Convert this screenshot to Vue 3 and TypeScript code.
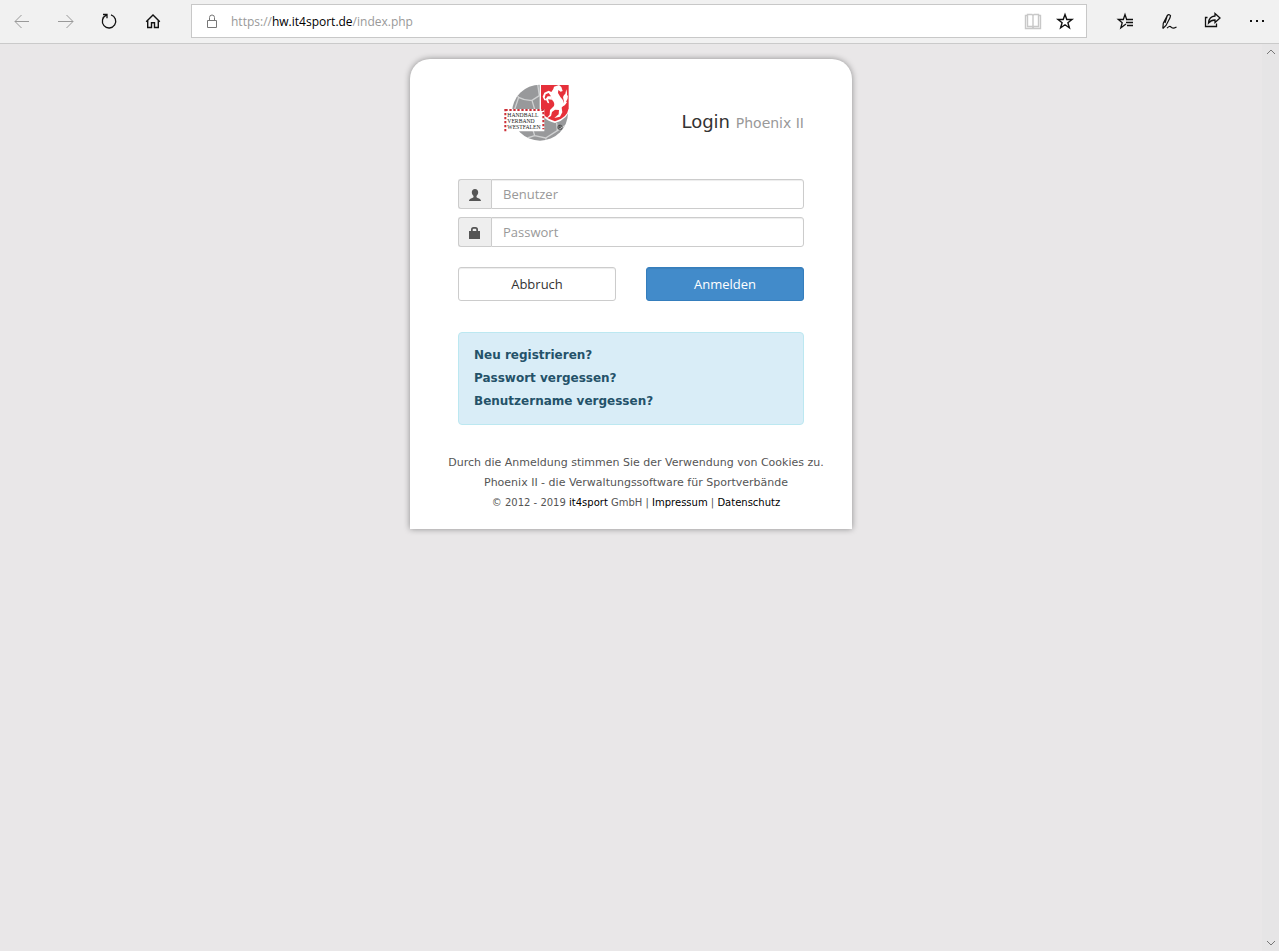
<script setup lang="ts">
import { ref } from 'vue'

const user = ref('')
const password = ref('')

const helpLinks: string[] = ['Neu registrieren?', 'Passwort vergessen?', 'Benutzername vergessen?']

function reset(): void {
  user.value = ''
  password.value = ''
}
</script>

<template>
  <div class="browser">
    <header class="toolbar">
      <nav class="tools" aria-label="Navigation">
        <button class="tool muted" type="button" aria-label="Zurück">
          <svg width="20" height="20" viewBox="0 0 20 20"><path d="M3 10.5H17M9.500 4L3 10.500L9.500 17" /></svg>
        </button>
        <button class="tool muted" type="button" aria-label="Vorwärts">
          <svg width="20" height="20" viewBox="0 0 20 20"><path d="M2 10.5H17M10.500 4L17 10.500L10.500 17" /></svg>
        </button>
        <button class="tool" type="button" aria-label="Aktualisieren">
          <svg width="20" height="20" viewBox="1 0 20 20">
            <path stroke-width="1.3" d="M12 3.900A6.700 6.700 0 1 1 7.300 4.200M4 3.500H8V7.300" />
          </svg>
        </button>
        <button class="tool" type="button" aria-label="Startseite">
          <svg width="20" height="20" viewBox="1 0 20 20">
            <path stroke-width="1.4" d="M3.200 10.800L10 4L16.800 10.800M4.700 9.500V16.500H8.500V11.700H11.500V16.500H15.300V9.500" />
          </svg>
        </button>
      </nav>

      <div class="address">
        <svg class="lock" width="20" height="20" viewBox="0 0 20 20">
          <path d="M5.500 9.500H14.500V16.500H5.500ZM7.500 9.500V6.500A2.500 2.500 0 0 1 12.500 6.500V9.500" />
        </svg>
        <div class="url" role="textbox" aria-label="Adresse" tabindex="0">https://<span class="host">hw.it4sport.de</span>/index.php</div>
        <button class="inner pale" type="button" aria-label="Leseansicht">
          <svg width="20" height="20" viewBox="0 0 20 20">
            <path stroke-width="1.400" d="M4.500 3.500H9L10 4.500L11 3.500H15.500V15.500H11L10 16.500L9 15.500H4.500ZM10 4.500V16M4.500 4.500H2.500V17.500H17.500V4.500H15.500" />
          </svg>
        </button>
        <button class="inner" type="button" aria-label="Zu Favoriten hinzufügen">
          <svg width="20" height="20" viewBox="0 0 20 20">
            <path stroke-width="1.4" d="M10 3.500L11.800 8.500H17L12.900 11.700L14.400 16.900L10 13.800L5.600 16.900L7.100 11.700L3 8.500H8.200Z" />
          </svg>
        </button>
      </div>

      <div class="tools">
        <button class="tool" type="button" aria-label="Hub">
          <svg width="20" height="20" viewBox="-1 0 20 20">
            <path stroke-width="1.300" d="M10.500 8L9 3.500L7.300 8.500H2.300L6.200 11.700L4.800 16.800L10 13M10 8.500H17M10 11.500H17M11 14.500H17" />
          </svg>
        </button>
        <button class="tool" type="button" aria-label="Notizen hinzufügen">
          <svg width="20" height="20" viewBox="0 0 20 20">
            <path stroke-width="1.200" d="M3.800 17.500L4.300 12.200L8.300 4.500Q10 2.500 11.500 4.700L11 6.800L7 14.500L3.800 17.500M8.300 4.500L6 12M8 17.200Q10.500 14.500 12 16Q13.500 18.200 17.500 16" />
          </svg>
        </button>
        <button class="tool" type="button" aria-label="Freigeben">
          <svg width="20" height="20" viewBox="0 0 20 20">
            <path stroke-width="1.300" d="M4.500 6.500H2.500V15.500H13.500V12.500M12 2.500L17 7L12 11.500V9Q8 9 5.500 12Q6 5.500 12 5Z" />
          </svg>
        </button>
        <button class="tool" type="button" aria-label="Weitere Aktionen">
          <svg width="20" height="20" viewBox="0 0 20 20">
            <path class="solid" d="M3 9H5V11H3ZM9 9H11V11H9ZM15 9H17V11H15Z" />
          </svg>
        </button>
      </div>
    </header>

    <div class="viewport">
      <main class="page">
        <form class="card" @submit.prevent>
          <div class="inset">
            <div class="pair heading">
              <svg class="logo" width="66" height="58" viewBox="40 28 198 174" role="img" aria-label="Handballverband Westfalen">
                <defs>
                  <clipPath id="ball"><circle cx="148" cy="114" r="84" /></clipPath>
                </defs>
                <circle cx="148" cy="114" r="84" fill="#98999b" />
                <g clip-path="url(#ball)" fill="none" stroke="#d0d1d2" stroke-width="4">
                  <path d="M84 68Q105 79 124 77L146 63M124 77L132 104M84 68L73 58M84 68L72 104M146 63L141 28M125 160L132 183L110 190M132 183L165 190L200 168M200 168L198 145M200 168L228 150M165 190L170 205" />
                </g>
                <path d="M147 28H237V101Q233 134 193 145Q151 134 147 101Z" fill="#fff" />
                <path d="M151 31H234V101Q230 130 193 140Q155 130 151 101Z" fill="#e6303a" />
                <g fill="#fff">
                  <path d="M190 36L205 31L212 37L216 49L210 51L203 46L202 55Q208 67 216 75Q222 87 213 99L215 113L208 126L191 130L204 119L205 106L193 105L184 112L181 124L167 132L177 120L178 106L190 94Q193 85 185 77L180 63L174 55L165 59L162 69L168 77L161 77L156 66L161 54L174 48L182 52L188 43Z" />
                  <path d="M183 65L171 65L165 73L171 85L176 86L172 74L184 75Z" />
                  <path d="M214 88Q222 83 218 72Q215 64 224 57L227 44Q230 55 229 63L232 62Q232 75 226 81L229 82Q223 94 214 96Z" />
                </g>
                <path d="M41 103H161V170H41Z" fill="#fff" />
                <path d="M44 106H158V164" fill="none" stroke="#cc3038" stroke-width="6" stroke-dasharray="7 5" />
                <path d="M44 103V170" fill="none" stroke="#cc3038" stroke-width="6" stroke-dasharray="7 5" />
                <g class="logo-text">
                  <text x="50" y="127">HANDBALL</text>
                  <text x="50" y="145">VERBAND</text>
                  <text x="50" y="163">WESTFALEN</text>
                </g>
                <circle cx="208" cy="158" r="7" fill="none" stroke="#444" stroke-width="2" />
                <path d="M205 163V153H209Q213 156 209 158H205M209 158L213 164" fill="none" stroke="#333" stroke-width="2" />
              </svg>
              <h1 class="title">Login <small>Phoenix II</small></h1>
            </div>

            <div class="field">
              <label class="addon" for="user" aria-label="Benutzer">
                <svg width="14" height="14" viewBox="0 0 14 14">
                  <path d="M7 1C9 1 10.200 2.300 10.200 4.200C10.200 6 9.200 7.200 8.500 8V9.200C9.500 10.200 13 10.400 13 13H1C1 10.400 4.500 10.200 5.500 9.200V8C4.800 7.200 3.800 6 3.800 4.200C3.800 2.300 5 1 7 1Z" />
                </svg>
              </label>
              <input id="user" v-model="user" type="text" placeholder="Benutzer" />
            </div>
            <div class="field">
              <label class="addon" for="password" aria-label="Passwort">
                <svg width="14" height="14" viewBox="0 0 14 14">
                  <path fill-rule="evenodd" d="M1 5H3V3.500Q3 1 5.500 1H7.500Q10 1 10 3.500V5H12V13H1ZM4.700 5H8.300V3.800Q8.300 2.700 7.300 2.700H5.700Q4.700 2.700 4.700 3.800Z" />
                </svg>
              </label>
              <input id="password" v-model="password" type="password" placeholder="Passwort" />
            </div>

            <div class="pair actions">
              <button class="btn" type="button" @click="reset">Abbruch</button>
              <button class="btn primary" type="submit">Anmelden</button>
            </div>

            <div class="help">
              <a v-for="link in helpLinks" :key="link" href="#">{{ link }}</a>
            </div>
          </div>

          <footer class="legal">
            <p>Durch die Anmeldung stimmen Sie der Verwendung von Cookies zu.</p>
            <p>Phoenix II - die Verwaltungssoftware für Sportverbände</p>
            <p class="copy">© 2012 - 2019 <a href="#">it4sport</a> GmbH | <a href="#">Impressum</a> | <a href="#">Datenschutz</a></p>
          </footer>
        </form>
      </main>

      <div class="scrollbar" aria-hidden="true">
        <svg width="16" height="16" viewBox="0 0 16 16"><path d="M4 10L8 6L12 10" /></svg>
        <svg width="16" height="16" viewBox="0 0 16 16"><path d="M4 6L8 10L12 6" /></svg>
      </div>
    </div>
  </div>
</template>

<style>
body {
  margin: 0;
}
</style>

<style scoped>
.browser {
  display: flex;
  flex-direction: column;
  min-height: 100vh;
  background: #e9e7e8;
  font-family: "DejaVu Sans", Verdana, sans-serif;
  font-size: 13px;
  color: #333;
}
.browser * {
  box-sizing: border-box;
}
.toolbar {
  display: flex;
  align-items: center;
  height: 44px;
  padding-bottom: 1px;
  background: #f1f1f1;
  border-bottom: 1px solid #cacaca;
}
.tools {
  display: flex;
}
.tools:first-child {
  margin-right: 15px;
}
.tools:last-child {
  margin-left: 16px;
}
.tool,
.inner {
  display: flex;
  align-items: center;
  justify-content: center;
  padding: 0;
  border: 0;
  background: none;
  color: #111;
}
.tool {
  width: 44px;
  height: 42px;
}
.tool svg,
.inner svg,
.lock,
.scrollbar svg {
  fill: none;
  stroke: currentColor;
}
.tool .solid {
  fill: currentColor;
  stroke: none;
}
.tool.muted {
  color: #999;
}
.address {
  flex: 1;
  display: flex;
  align-items: center;
  height: 34px;
  padding: 0 5px 0 10px;
  background: #fff;
  border: 1px solid #c8c8c8;
}
.lock {
  color: #777;
}
.url {
  flex: 1;
  margin-left: 9px;
  font-family: "Open Sans", "Noto Sans", sans-serif;
  font-size: 12px;
  color: #999;
}
.host {
  color: #000;
}
.inner {
  width: 32px;
  height: 32px;
}
.inner.pale {
  color: #c8c8c8;
}
.viewport {
  flex: 1;
  display: flex;
}
.page {
  flex: 1;
  padding: 15px 0;
}
.scrollbar {
  display: flex;
  flex-direction: column;
  justify-content: space-between;
  align-items: flex-end;
  width: 17px;
  background: #e6e5e6;
  color: #777;
}
.card {
  max-width: 442px;
  margin: 0 auto;
  padding: 25px 0 16px;
  background: #fff;
  border-radius: 20px 20px 0 0;
  box-shadow: 0 0 6px rgba(0, 0, 0, 0.4);
}
.inset {
  padding: 0 48px;
}
.pair {
  display: grid;
  grid-template-columns: 1fr 1fr;
  gap: 30px;
}
.heading {
  align-items: center;
  margin-bottom: 37px;
}
.logo {
  justify-self: center;
}
.logo-text {
  font-family: "Liberation Serif", serif;
  font-size: 17px;
  fill: #222;
}
.title {
  margin: 0;
  padding-top: 18px;
  font-size: 18px;
  font-weight: normal;
  line-height: 22px;
  text-align: right;
  white-space: nowrap;
}
.title small {
  font-size: 14px;
  color: #999;
}
.field {
  display: flex;
  height: 30px;
  margin-bottom: 8px;
}
.addon {
  display: flex;
  align-items: center;
  justify-content: center;
  width: 33px;
  padding-top: 2px;
  background: #eee;
  border: 1px solid #ccc;
  border-right: 0;
  border-radius: 3px 0 0 3px;
}
.addon svg {
  fill: #555;
}
.field input {
  flex: 1;
  min-width: 0;
  padding: 0 11px;
  border: 1px solid #ccc;
  border-radius: 0 3px 3px 0;
  background: #fff;
  box-shadow: inset 0 1px 1px rgba(0, 0, 0, 0.075);
  font-family: "Open Sans", "Noto Sans", sans-serif;
  font-size: 13px;
  color: #555;
}
.field input::placeholder {
  color: #999;
  opacity: 1;
}
.actions {
  margin-top: 20px;
}
.btn {
  height: 34px;
  padding: 0;
  border: 1px solid #ccc;
  border-radius: 3px;
  background: #fff;
  box-shadow: inset 0 1px 1px rgba(0, 0, 0, 0.075);
  font-family: "Open Sans", "Noto Sans", sans-serif;
  font-size: 13px;
  color: #333;
}
.primary {
  background: #428bca;
  border-color: #357ebd;
  color: #fff;
}
.help {
  display: flex;
  flex-direction: column;
  align-items: flex-start;
  margin: 31px 0 28px;
  padding: 11px 15px;
  background: #d9edf7;
  border: 1px solid #bce8f1;
  border-radius: 4px;
}
.help a {
  color: #245269;
  font-size: 12px;
  font-weight: bold;
  line-height: 23px;
  text-decoration: none;
}
.legal {
  padding-left: 10px;
  font-size: 11px;
  line-height: 20px;
  text-align: center;
  color: #555;
}
.legal p {
  margin: 0;
}
.legal .copy {
  font-size: 10px;
}
.legal a {
  color: #000;
  text-decoration: none;
}
</style>
